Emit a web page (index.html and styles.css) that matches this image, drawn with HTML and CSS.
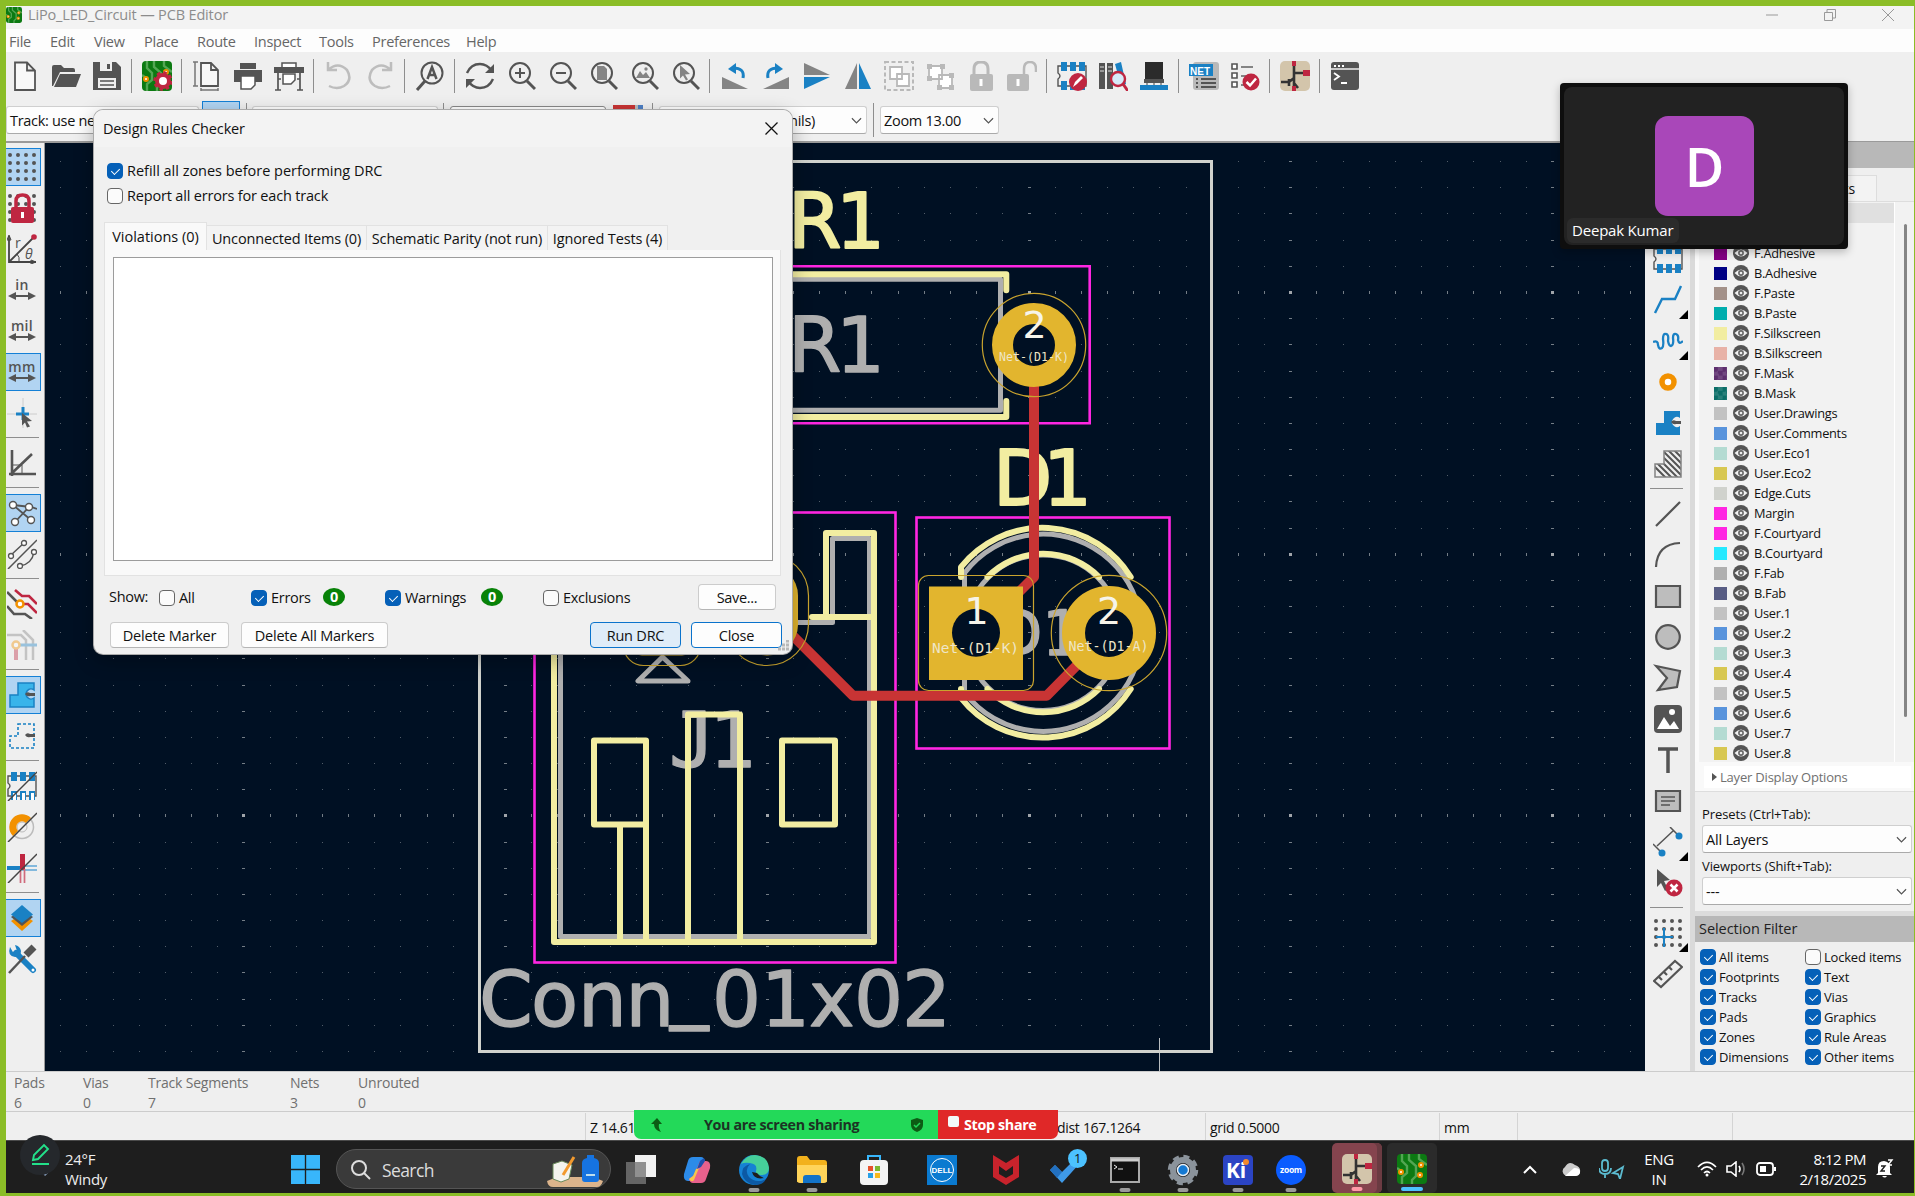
FILE: index.html
```html
<!DOCTYPE html>
<html lang="en">
<head>
<meta charset="utf-8">
<title>LiPo_LED_Circuit — PCB Editor</title>
<link rel="stylesheet" href="styles.css">
</head>
<body>
<svg width="0" height="0" class="defs">
  <defs>
    <symbol id="board" viewBox="0 0 30 30"><rect width="30" height="30" rx="4" fill="#0c7a12"/><path d="M5 0v7l5 5v7l-5 4v7M12 0v6l7 6v10l-4 4v4M22 0v5l8 6M0 14l4 3" fill="none" stroke="#53a653" stroke-width="2.4"/><g fill="#fff" stroke="#f29100" stroke-width="2"><circle cx="4" cy="18" r="2"/><circle cx="24" cy="11" r="2"/><circle cx="23" cy="21" r="2"/></g></symbol>
    <symbol id="sch" viewBox="0 0 30 30"><rect width="30" height="30" rx="5" fill="#d3c5ab"/><path d="M14 5v20M14 12h10M14 17l-5 4H1M9 18v7M14 22l4 5" stroke="#333" stroke-width="2.6" fill="none"/><path d="M12 0h4v5h-4zM23 9h7v6h-7zM12 25h4v5h-4z" fill="#bf2641"/></symbol>
    <symbol id="mag" viewBox="0 0 30 30"><circle cx="14" cy="12" r="10" fill="none" stroke="#545454" stroke-width="2"/><path d="M21 20l8 8" stroke="#545454" stroke-width="3"/></symbol>
    <symbol id="fp" viewBox="0 0 30 30"><path d="M4 5H1v7q4 3 0 6v7h28V5H4z" fill="none" stroke="#545454" stroke-width="1.4"/><path d="M4 1h6v9H4zM13 1h6v9h-6zM22 1h6v9h-6zM4 20h6v9H4zM13 20h6v9h-6zM22 20h6v9h-6z" fill="#1a81c4"/></symbol>
    <symbol id="zone" viewBox="0 0 30 30"><path d="M11 3h16v7a5 5 0 1 0 0 8v9H3V15h8z"/><path d="M18 14q2-3 5-1h5v3h-5q-3 1-5-2z" fill="#545454" stroke="none"/></symbol>
    <symbol id="eye" viewBox="0 0 16 16"><circle cx="8" cy="8" r="8" fill="#545454"/><path d="M1.5 8q6.500-7 13 0q-6.500 7-13 0z" fill="#f2f2f2"/><circle cx="8" cy="8" r="2.900" fill="#666"/><circle cx="8" cy="8" r="1.300" fill="#eee"/></symbol>
    <symbol id="dots" viewBox="0 0 30 30"><path d="M3 3h0M11 3h0M19 3h0M27 3h0M3 11h0M11 11h0M19 11h0M27 11h0M3 19h0M11 19h0M19 19h0M27 19h0M3 27h0M11 27h0M19 27h0M27 27h0" stroke="#545454" stroke-width="4" stroke-linecap="round"/></symbol>
    <symbol id="arrows" viewBox="0 0 30 30"><path d="M5 20h20" stroke="#545454" stroke-width="2"/><path d="M1 20l8-4v8zM29 20l-8-4v8z" fill="#545454"/></symbol>
  </defs>
</svg>

<div class="screen">
  <header class="titlebar">
    <svg class="app-ico"><use href="#board"/></svg>
    <span class="app-title">LiPo_LED_Circuit — PCB Editor</span>
    <div class="win-ctl">
      <svg width="12" height="12"><path d="M0 6h12"/></svg>
      <svg width="12" height="12"><path d="M.5 3.500h8v8h-8zM3 3V.500h8.500V9H9"/></svg>
      <svg width="12" height="12"><path d="M0 0l12 12M12 0L0 12"/></svg>
    </div>
  </header>
  <nav class="menubar"><span class="m1">File</span><span class="m2">Edit</span><span class="m3">View</span><span class="m4">Place</span><span class="m5">Route</span><span class="m6">Inspect</span><span class="m7">Tools</span><span class="m8">Preferences</span><span class="m9">Help</span></nav>

  <div class="toolbar">
    <i><svg viewBox="0 0 30 30"><path d="M5 1.500h12l8 8V29H5zM17 1.500v8h8" fill="#f8f8f8" stroke="#545454" stroke-width="1.800"/></svg></i>
    <i><svg viewBox="0 0 30 30"><path d="M1 25V6q0-2 2-2h7l3 3h9q2 0 2 2v2H9L2 25z" fill="#545454"/><path d="M9 13h21l-5 13H3z" fill="#545454"/></svg></i>
    <i><svg viewBox="0 0 30 30"><path d="M1 1h23l5 5v23H1z" fill="#545454"/><path d="M8 1h12v9H8z" fill="#efefef"/><path d="M15 3h3v5h-3z" fill="#545454"/><path d="M6 17h18v10H6z" fill="#efefef"/><path d="M8 20h14M8 24h14" stroke="#545454" stroke-width="1.500"/></svg></i>
    <b></b>
    <i><svg viewBox="0 0 30 30"><use href="#board"/><circle cx="21" cy="20" r="6" fill="#fff" stroke="#bf2641" stroke-width="4"/><circle cx="21" cy="20" r="8.500" fill="none" stroke="#bf2641" stroke-width="2.500" stroke-dasharray="3.500 3.170"/><circle cx="21" cy="20" r="2.500" fill="#fff"/></svg></i>
    <b></b>
    <i><svg viewBox="0 0 30 30"><path d="M9 2h10l7 7v16H9zM19 2v7h7" fill="#f8f8f8" stroke="#545454" stroke-width="1.800"/><path d="M3 1v24M1 1h5M1 25h5M9 29h17M9 27v3M26 27v3" stroke="#777" stroke-width="1.500"/></svg></i>
    <i><svg viewBox="0 0 30 30"><path d="M7 2h16v6H7zM1 9h28v12H1z" fill="#545454"/><path d="M8 15h14v9l-4 4H8z" fill="#fff" stroke="#545454" stroke-width="1.500"/></svg></i>
    <i><svg viewBox="0 0 30 30"><path d="M8 2h14v5H8z" fill="#fff" stroke="#545454" stroke-width="1.500"/><path d="M0 6h30v6H0z" fill="#545454"/><path d="M4 12v17M26 12v17M1 29h6M23 29h6M4 18h3M23 18h3" stroke="#545454" stroke-width="1.700"/><path d="M9 13h12v6l-4 4H9z" fill="#fff" stroke="#545454" stroke-width="1.500"/></svg></i>
    <b></b>
    <i><svg viewBox="0 0 30 30"><path d="M4 1v8h9M4 9Q14 0 23 9q6 10-3 16-7 4-15 0" fill="none" stroke="#bdbdbd" stroke-width="2.500"/></svg></i>
    <i><svg viewBox="0 0 30 30"><path d="M26 1v8h-9M26 9Q16 0 7 9q-6 10 3 16 7 4 15 0" fill="none" stroke="#bdbdbd" stroke-width="2.500"/></svg></i>
    <b></b>
    <i><svg viewBox="0 0 30 30"><circle cx="17" cy="12" r="10.500" fill="none" stroke="#545454" stroke-width="2"/><path d="M10 20l-8 9" stroke="#545454" stroke-width="3"/><path d="M12.500 18L17 6l4.500 12M14 14h6" fill="none" stroke="#545454" stroke-width="2.500"/></svg></i>
    <b></b>
    <i><svg viewBox="0 0 30 30"><path d="M2 12Q6 3 15 3q7 0 12 7M28 18q-4 9-13 9-7 0-12-7" fill="none" stroke="#545454" stroke-width="2.400"/><path d="M29 3v9h-9zM1 27v-9h9z" fill="#545454"/></svg></i>
    <i><svg viewBox="0 0 30 30"><use href="#mag"/><path d="M14 7v10M9 12h10" stroke="#545454" stroke-width="2"/></svg></i>
    <i><svg viewBox="0 0 30 30"><use href="#mag"/><path d="M9 12h10" stroke="#545454" stroke-width="2"/></svg></i>
    <i><svg viewBox="0 0 30 30"><use href="#mag"/><path d="M9 5h7l3 3v11H9z" fill="#848484"/></svg></i>
    <i><svg viewBox="0 0 30 30"><use href="#mag"/><path d="M7 17l4-7 3 4 3-3 4 6z" fill="#848484"/><circle cx="17" cy="8" r="1.700" fill="#848484"/></svg></i>
    <i><svg viewBox="0 0 30 30"><use href="#mag"/><path d="M10 4l10 9-5 .5 3 5-2 1-3-5-3 3z" fill="#848484"/></svg></i>
    <b></b>
    <i><svg viewBox="0 0 30 30"><path d="M2 16l26 12H2z" fill="#848484"/><path d="M23 17q2-10-10-10" fill="none" stroke="#1a81c4" stroke-width="3"/><path d="M8 8l8-6v11z" fill="#1a81c4"/></svg></i>
    <i><svg viewBox="0 0 30 30"><path d="M28 16v12H2z" fill="#848484"/><path d="M7 17Q5 7 17 7" fill="none" stroke="#1a81c4" stroke-width="3"/><path d="M22 8l-8-6v11z" fill="#1a81c4"/></svg></i>
    <i><svg viewBox="0 0 30 30"><path d="M2 2l26 12H2z" fill="#848484"/><path d="M2 28l26-12H2z" fill="#1a81c4"/></svg></i>
    <i><svg viewBox="0 0 30 30"><path d="M2 28L14 2v26z" fill="#848484"/><path d="M28 28L16 2v26z" fill="#1a81c4"/></svg></i>
    <i><svg viewBox="0 0 30 30"><rect x="1" y="1" width="28" height="28" fill="none" stroke="#b9b9b9" stroke-width="2" stroke-dasharray="4 2.500"/><path d="M6 6h12v12H6zM13 13h12v12H13z" fill="#fff" stroke="#b9b9b9" stroke-width="1.800"/></svg></i>
    <i><svg viewBox="0 0 30 30"><path d="M4 5h13v13H4zM14 14h13v13H14z" fill="#fff" stroke="#b9b9b9" stroke-width="1.800"/><path d="M2 3h5v5H2zM15 3h5v5h-5zM2 15h5v5H2zM24 12h5v5h-5zM12 24h5v5h-5zM24 24h5v5h-5z" fill="#b9b9b9"/></svg></i>
    <i><svg viewBox="0 0 30 30"><path d="M8 14V8q0-7 7-7t7 7v6" fill="none" stroke="#b9b9b9" stroke-width="3"/><rect x="4" y="13" width="23" height="17" rx="2" fill="#b9b9b9"/><path d="M15 18v7" stroke="#fff" stroke-width="3"/></svg></i>
    <i><svg viewBox="0 0 30 30"><path d="M17 14V8q0-7 6-7t6 7v3" fill="none" stroke="#b9b9b9" stroke-width="2.500"/><rect y="13" width="22" height="17" rx="2" fill="#b9b9b9"/><path d="M11 18v7" stroke="#fff" stroke-width="3"/></svg></i>
    <b></b>
    <i><svg viewBox="0 0 30 30"><use href="#fp"/><circle cx="21" cy="21" r="9" fill="#bf2641"/><path d="M16 26l2-5 6-6 2 2-6 6z" fill="#fff"/></svg></i>
    <i><svg viewBox="0 0 30 30"><path d="M1 2h6v26H1zM9 2h6v26H9z" fill="#545454"/><path d="M17 3l6-2 5 22-5 2z" fill="#1a81c4"/><path d="M2 6h4M10 6h4M2 10h4M10 10h4" stroke="#ddd"/><circle cx="20" cy="18" r="7" fill="#d6eaf8" stroke="#bf2641" stroke-width="2.400"/><path d="M25 23l5 7" stroke="#bf2641" stroke-width="3"/></svg></i>
    <i><svg viewBox="0 0 30 30"><path d="M6 1h18v17H6z" fill="#2b2b2b"/><path d="M5 18h20v4H5z" fill="#545454"/><path d="M8 22v3M15 22v3M22 22v3" stroke="#999" stroke-width="2"/><path d="M1 24h28v5H1z" fill="#1a81c4"/></svg></i>
    <b></b>
    <i><svg viewBox="0 0 30 30"><rect x="4" y="1" width="26" height="28" rx="3" fill="#b9b9b9"/><path d="M0 3h24v12H0z" fill="#1a81c4"/><text x="1" y="13.500" class="ico-net">NET</text><path d="M7 18h2M12 18h15M7 22h2M12 22h15M7 26h2M12 26h15" stroke="#545454" stroke-width="2"/></svg></i>
    <i><svg viewBox="0 0 30 30"><path d="M2 3h5v5H2zM2 12h5v5H2zM2 21h5v5H2z" fill="#fff" stroke="#545454" stroke-width="1.600"/><path d="M11 6h12M11 15h6M11 24h4" stroke="#848484" stroke-width="2"/><circle cx="21" cy="21" r="8.500" fill="#bf2641"/><path d="M16.500 21l3.500 3.500 6-7" stroke="#fff" stroke-width="2.500" fill="none"/></svg></i>
    <b></b>
    <i><svg><use href="#sch"/></svg></i>
    <b></b>
    <i><svg viewBox="0 0 30 30"><rect x="1" y="1" width="28" height="28" rx="3" fill="#545454"/><path d="M1 8h28" stroke="#eee" stroke-width="1.500"/><path d="M4 5h2M8 5h2M12 5h2" stroke="#fff" stroke-width="2"/><path d="M4 12l5 3.500-5 3.500M11 22h6" fill="none" stroke="#fff" stroke-width="1.800"/></svg></i>
  </div>

  <div class="toolbar2">
    <div class="combo c-track">Track: use netclass width</div>
    <div class="auto-btn"></div><b></b>
    <div class="combo c-via"></div><b></b>
    <div class="combo c-layer"></div>
    <div class="pair"></div><b></b>
    <div class="combo c-grid"><span>mils)</span><svg class="chev" viewBox="0 0 12 8"><path d="M1 1l5 5 5-5"/></svg></div><b></b>
    <div class="combo c-zoom">Zoom 13.00<svg class="chev" viewBox="0 0 12 8"><path d="M1 1l5 5 5-5"/></svg></div>
  </div>

  <main class="work">
    <aside class="leftbar">
      <i class="on"><svg><use href="#dots"/></svg></i>
      <i><svg viewBox="0 0 30 30"><use href="#dots"/><path d="M9 15V8q0-6 6.500-6T22 8v7" fill="none" stroke="#bf2641" stroke-width="3.500"/><rect x="4" y="14" width="23" height="16" rx="2" fill="#bf2641"/><path d="M15.500 19v6" stroke="#fff" stroke-width="3"/></svg></i>
      <i><svg viewBox="0 0 30 30"><path d="M2 2v26h27M2 28L26 4" fill="none" stroke="#444" stroke-width="1.800"/><path d="M0 6l2-5 2 5zM24 26l5 2-5 2zM10 20q3 3 2 8" fill="none" stroke="#444"/><circle cx="27" cy="3" r="2.800" fill="#bf2641"/><text x="8" y="14" class="ico-r">r</text><text x="18" y="25" class="ico-t">θ</text></svg></i>
      <i><svg viewBox="0 0 30 30"><use href="#arrows" y="1"/><text x="15" y="15" class="ico-u">in</text></svg></i>
      <i><svg viewBox="0 0 30 30"><use href="#arrows" y="1"/><text x="15" y="15" class="ico-u">mil</text></svg></i>
      <i class="on"><svg viewBox="0 0 30 30"><use href="#arrows" y="1"/><text x="15" y="15" class="ico-u">mm</text></svg></i>
      <i><svg viewBox="0 0 30 30"><path d="M16 0v30M0 16h30" stroke="#ccc"/><path d="M16 9v13M9 16h13" stroke="#1a81c4" stroke-width="3"/><path d="M15 15l10 8-5 .5 3 5-3 1-2-5-3 3z" fill="#545454"/></svg></i>
      <b></b>
      <i><svg viewBox="0 0 30 30"><path d="M5 2v26M2 26h27M4 26L25 6" stroke="#545454" stroke-width="2.600"/><path d="M6 17h9v9" fill="none" stroke="#545454"/></svg></i>
      <b></b>
      <i class="on"><svg viewBox="0 0 30 30"><path d="M6 7l18 2 6 2M8 24L22 9M6 7l18 15" stroke="#545454" stroke-width="1.800" fill="none"/><g fill="#fff" stroke="#545454" stroke-width="1.400"><circle cx="6" cy="7" r="3.500"/><circle cx="22" cy="9" r="3.500"/><circle cx="24" cy="22" r="3.500"/><circle cx="8" cy="24" r="3.500"/></g></svg></i>
      <i><svg viewBox="0 0 30 30"><path d="M1 30L30 1M4 16L17 4M13 27q12-2 14-14" stroke="#545454" stroke-width="1.500" fill="none"/><g fill="#fff" stroke="#545454" stroke-width="1.300"><circle cx="4" cy="17" r="2.500"/><circle cx="17" cy="4" r="2.500"/><circle cx="27" cy="13" r="2.500"/><circle cx="13" cy="27" r="2.500"/></g></svg></i>
      <b></b>
      <i><svg viewBox="0 0 30 30"><path d="M0 3l12 12M0 17l7 8h11l7 5" stroke="#545454" stroke-width="2.600" fill="none"/><path d="M8 1l7 6h7l8 8M13 15h8l9 9" stroke="#bf2641" stroke-width="2.600" fill="none"/><circle cx="13" cy="15" r="3.500" fill="#fff" stroke="#f29100" stroke-width="2.500"/></svg></i>
      <i class="dim"><svg viewBox="0 0 30 30"><path d="M0 5h14l5 5v20M16 0l10 10v20" stroke="#848484" stroke-width="2.500" fill="none"/><path d="M9 15h21" stroke="#1a81c4" stroke-width="3"/><path d="M9 17v13" stroke="#bf2641" stroke-width="4"/><circle cx="9" cy="15" r="3.500" fill="#fff" stroke="#f29100" stroke-width="2.500"/></svg></i>
      <b></b>
      <i class="on"><svg viewBox="0 0 30 30"><use href="#zone" fill="#39b4ea" stroke="#1a81c4" stroke-width="1.500"/></svg></i>
      <i><svg viewBox="0 0 30 30"><path d="M11 3h16v24H3V15h8z" fill="none" stroke="#1a81c4" stroke-width="1.600" stroke-dasharray="3 2"/><path d="M18 14q2-3 5-1h5v3h-5q-3 1-5-2z" fill="#545454"/></svg></i>
      <b></b>
      <i><svg viewBox="0 0 30 30"><use href="#fp"/><path d="M6 22h3v7H6zM15 22h3v7h-3zM24 22h3v7h-3z" fill="#fff"/><path d="M1 30L30 1" stroke="#444" stroke-width="1.500"/></svg></i>
      <i><svg viewBox="0 0 30 30"><circle cx="15" cy="15" r="11.500" fill="none" stroke="#bbb" stroke-width="1.500"/><circle cx="15" cy="15" r="5" fill="none" stroke="#bbb"/><path d="M6 24A12.500 12.500 0 0 1 24 6l-5 5a5.500 5.500 0 0 0-8 8z" fill="#f29100"/><path d="M1 30L30 1" stroke="#444" stroke-width="1.500"/></svg></i>
      <i><svg viewBox="0 0 30 30"><path d="M0 15h15" stroke="#1a81c4" stroke-width="4"/><path d="M15 13h15M15 17h15" stroke="#60a8d8" stroke-width="1.700"/><path d="M15.500 1v16" stroke="#bf2641" stroke-width="5"/><path d="M13.500 16v14M17.500 16v14" stroke="#d06a7c" stroke-width="1.700"/><path d="M1 30L30 1" stroke="#444" stroke-width="1.500"/></svg></i>
      <b></b>
      <i class="on"><svg viewBox="0 0 30 30"><path d="M4 18l11 10 11-10-3-2-8 6-8-6z" fill="#f29100"/><path d="M4 14l11 9 11-9-3-2H7z" fill="#545454"/><path d="M15 2l11 9.500L15 20 4 11.500z" fill="#1a81c4"/></svg></i>
      <i><svg viewBox="0 0 30 30"><path d="M9 9l17 17" stroke="#1a81c4" stroke-width="6" stroke-linecap="round"/><path d="M3 3q-3 9 5 10 6 0 6-6-1-5-6-6l2 6-3 3z" fill="#1a81c4"/><path d="M2 29l16-17" stroke="#545454" stroke-width="2.500"/><path d="M19 11l8-8" stroke="#545454" stroke-width="7"/><circle cx="26" cy="26" r="1.500" fill="#fff"/></svg></i>
    </aside>

    <svg class="pcb" viewBox="45 143 1600 928" width="1600" height="928">
      <g id="grid"></g>
      <path d="M1159.500 1038v33" stroke="#b9bdc0"/>
      <rect x="479.500" y="161.500" width="732" height="890" class="edge"/>
      <g class="fab">
        <path d="M700 279.300h300.500v131H700M560.500 600v336.500h309v-398h-37v84H798M662.500 657l-24.500 24h50z"/>
        <path d="M964.500 573v119.500A98.700 98.700 0 1 0 964.500 573z"/>
        <circle cx="1043" cy="632.700" r="77.700"/>
      </g>
      <g class="label fabtext">
        <text x="788 836" y="372">R1</text>
        <text x="669 709" y="767" class="j1">J1</text>
        <text x="479 531 578 625.500 670 712 761 809 854 902" y="1026 1026 1026 1026 1013 1026">Conn_01x02</text>
        <text x="994 1042" y="655" class="small">D1</text>
      </g>
      <g class="court">
        <path d="M700 266.300h389.700v157H700"/>
        <rect x="534.500" y="512.500" width="361" height="450"/>
        <rect x="916.500" y="517.500" width="253" height="231"/>
      </g>
      <g class="silk">
        <path d="M700 274.300h306.300v16M700 417h306.300v-16"/>
        <path d="M554 600v342h320V533h-48v84M812 617h62"/>
        <path d="M594 740.500h52V942M594 740.500v84h52M620 824.500V942M688 942V714.500h52V942M782 740.500h53v84h-53z"/>
        <path d="M961 577v-10A104 104 0 0 1 1130.700 577M961 689v9A104 104 0 0 0 1130.700 689"/>
        <path d="M987.500 577a78.500 78.500 0 0 1 111.500 0M987.500 689a78.500 78.500 0 0 0 111.500 0"/>
      </g>
      <g class="label silktext">
        <text x="788 836" y="248">R1</text>
        <text x="993 1043" y="505">D1</text>
      </g>
      <path class="track" d="M1034 345v232l-56 56M767 610l86 85.700h193.700l62-62.700"/>
      <g class="pad">
        <circle cx="1034" cy="345" r="31.500" stroke-width="21"/>
        <rect x="929" y="586.500" width="94" height="93.500" class="solid"/>
        <circle cx="976" cy="632.800" r="24" stroke="none"/>
        <circle cx="1109" cy="633" r="35.500" stroke-width="23"/>
        <rect x="736" y="564.500" width="62" height="91" rx="31" class="solid"/>
        <rect x="634" y="564.500" width="56" height="91" rx="8" class="solid"/>
      </g>
      <g class="clear">
        <circle cx="1034" cy="345" r="51.700"/>
        <rect x="918.500" y="575.500" width="115" height="115" rx="10"/>
        <circle cx="1109" cy="633" r="57.700"/>
        <rect x="725.500" y="554" width="83" height="111.500" rx="41.500"/>
        <rect x="623.500" y="554" width="77" height="111.500" rx="20"/>
      </g>
      <g class="padnum"><text x="1034.500" y="337.500">2</text><text x="976.500" y="624">1</text><text x="1109" y="624">2</text></g>
      <g class="net"><text x="1034" y="361" textLength="70">Net-(D1-K)</text><text x="975.500" y="652.500" textLength="87" class="lg">Net-(D1-K)</text><text x="1108.500" y="650.500" textLength="80" class="md">Net-(D1-A)</text></g>
    </svg>

    <aside class="rightbar">
      <i><svg><use href="#fp"/></svg></i>
      <i class="more"><svg viewBox="0 0 30 30"><path d="M2 28l7-14h13l6-13" fill="none" stroke="#1a81c4" stroke-width="2.400"/></svg></i>
      <i class="more"><svg viewBox="0 0 30 30"><path d="M0 16q5-2 5 3 1 5 4 3 2-2 1-9 0-6 3-5 3 0 2 7 1 5 3 5 3-1 2-8 0-5 3-4 3 1 2 6 1 5 5 1" fill="none" stroke="#1a81c4" stroke-width="2.300"/></svg></i>
      <i><svg viewBox="0 0 30 30"><circle cx="15" cy="15" r="6" fill="#fff" stroke="#f29100" stroke-width="5.500"/></svg></i>
      <i><svg viewBox="0 0 30 30"><use href="#zone" fill="#1a81c4"/></svg></i>
      <i><svg viewBox="0 0 30 30"><clipPath id="hz"><path d="M11 2h17v26H2V15h9z"/></clipPath><g clip-path="url(#hz)"><path d="M-10 0l30 30M-4 0l30 30M2 0l30 30M8 0l30 30M14 0l30 30M20 0l30 30M-16 0l30 30" stroke="#545454" stroke-width="2"/></g><path d="M11 2h17v26H2V15h9z" fill="none" stroke="#848484" stroke-width="1.500"/></svg></i>
      <b></b>
      <i><svg viewBox="0 0 30 30"><path d="M3 27L27 3" stroke="#545454" stroke-width="2.200"/></svg></i>
      <i><svg viewBox="0 0 30 30"><path d="M3 27Q4 4 27 3" stroke="#545454" stroke-width="2.200" fill="none"/></svg></i>
      <i><svg viewBox="0 0 30 30"><path d="M3 5h24v21H3z" fill="#bdbdbd" stroke="#545454" stroke-width="2.200"/></svg></i>
      <i><svg viewBox="0 0 30 30"><circle cx="15" cy="15" r="11.800" fill="#bdbdbd" stroke="#545454" stroke-width="2.200"/></svg></i>
      <i><svg viewBox="0 0 30 30"><path d="M3 3l24 5-3 16-19 3 9-12z" fill="#bdbdbd" stroke="#545454" stroke-width="2.200"/></svg></i>
      <i><svg viewBox="0 0 30 30"><rect x="1" y="1" width="28" height="28" rx="4" fill="#545454"/><path d="M4 25l7-12 6 9 4-5 5 8z" fill="#fff"/><circle cx="19" cy="8" r="3" fill="#fff"/></svg></i>
      <i><svg viewBox="0 0 30 30"><path d="M5 4h20M15 4v24" stroke="#545454" stroke-width="3.500"/></svg></i>
      <i><svg viewBox="0 0 30 30"><path d="M3 5h24v20H3z" fill="#bdbdbd" stroke="#545454" stroke-width="2.200"/><path d="M8 11h14M8 15h14M8 19h9" stroke="#545454" stroke-width="1.500"/></svg></i>
      <i class="more"><svg viewBox="0 0 30 30"><path d="M0 17l9 9M17 0l9 9M4 19L20 4" stroke="#545454" stroke-width="1.500"/><circle cx="9" cy="26" r="3.500" fill="#1a81c4"/><circle cx="26" cy="9" r="3.500" fill="#1a81c4"/></svg></i>
      <i><svg viewBox="0 0 30 30"><path d="M4 1l13 11-6 1 4 8-3 2-4-8-4 4z" fill="#545454"/><circle cx="21" cy="20" r="8.500" fill="#bf2641"/><path d="M17.500 16.500l7 7M24.500 16.500l-7 7" stroke="#fff" stroke-width="2.600"/></svg></i>
      <b></b>
      <i class="more"><svg viewBox="0 0 30 30"><use href="#dots"/><path d="M11 10v19M3 19h17" stroke="#1a81c4" stroke-width="2"/></svg></i>
      <i><svg viewBox="0 0 30 30"><path d="M1 22L22 2l7 6L8 28zM6 18l3 3M11 13l3 3M16 8l3 3" fill="none" stroke="#545454" stroke-width="2.200"/></svg></i>
    </aside>
    <div class="sash"></div>

    <aside class="panel">
      <div class="head"></div>
      <div class="ptabs"><span>Objects</span></div>
      <div class="layers">
        <div class="layer-list" id="layers"></div>
        <div class="scroll"></div>
      </div>
      <div class="ldo"><span><u></u>Layer Display Options</span></div>
      <label class="l1">Presets (Ctrl+Tab):</label>
      <div class="combo pc">All Layers<svg class="chev" viewBox="0 0 12 8"><path d="M1 1l5 5 5-5"/></svg></div>
      <label class="l2">Viewports (Shift+Tab):</label>
      <div class="combo pc">---<svg class="chev" viewBox="0 0 12 8"><path d="M1 1l5 5 5-5"/></svg></div>
      <div class="head sel">Selection Filter</div>
      <div class="filter" id="filter"></div>
    </aside>
  </main>

  <section class="msg">
    <div class="g1">Pads<br>6</div><div class="g2">Vias<br>0</div><div class="g3">Track Segments<br>7</div><div class="g4">Nets<br>3</div><div class="g5">Unrouted<br>0</div>
  </section>
  <section class="status">
    <span class="s0"></span><span class="s1">Z 14.61</span><span class="s2">dist 167.1264</span><span class="s3">grid 0.5000</span><span class="s4">mm</span><span class="s5"></span><span class="s6"></span>
  </section>

  <footer class="taskbar">
    <div class="weather">24°F<br>Windy</div>
    <svg class="tb-win" viewBox="0 0 30 30"><path d="M0 0h14.300v14.300H0zM15.700 0H30v14.300H15.700zM0 15.700h14.300V30H0zM15.700 15.700H30V30H15.700z" fill="#38b6fb"/></svg>
    <div class="search">
      <svg width="22" height="22" viewBox="0 0 22 22"><circle cx="9" cy="9" r="7" fill="none" stroke="#ddd" stroke-width="2"/><path d="M14 14l6 6" stroke="#ddd" stroke-width="2"/></svg>
      <span>Search</span>
      <svg class="art" viewBox="0 0 56 34"><path d="M0 28l10-4h36l10 4q-2 6-6 6H6q-5 0-6-6z" fill="#dcb48c"/><path d="M6 11l9-3 10 4-3 14-8 3-8-3z" fill="#f4f4ee" stroke="#6a8a5a"/><path d="M16 22L27 4" stroke="#f29a2e" stroke-width="3"/><path d="M35 10q0-4 5-5V2h7v3q5 1 5 5v16q0 3-3 3H38q-3 0-3-3z" fill="#1673e0"/><path d="M39 22h9" stroke="#bde" stroke-width="2"/></svg>
    </div>
    <svg class="tb t1" viewBox="0 0 30 30"><path d="M9 0h21v22H9z" fill="#f2f2f2"/><path d="M0 7h20v22H0z" fill="#777" opacity=".8"/></svg>
    <svg class="tb t2" viewBox="0 0 30 30"><path d="M11 2h8q3 0 4 4l-5 6-6 14H6Q1 26 2 19L6 6q1-4 5-4z" fill="#2c8be8"/><path d="M19 28h-8q-3 0-4-4l5-4 6-14h6q5 0 4 7l-4 11q-1 4-5 4z" fill="#e8618c"/><path d="M7 24l4-3 3-7 3-1-5 12q-2 3-5-1z" fill="#f4c64c"/><path d="M18 6l-3 8 4-2 4-6-1-3z" fill="#1d4fae"/></svg>
    <svg class="tb t3" viewBox="0 0 30 30"><circle cx="15" cy="15" r="15" fill="#1682d4"/><path d="M2 9Q7 0 16 0q13 1 14 13 0 7-8 7-6 0-5-4 2-7-6-8-6-1-9 1z" fill="#46cf9a"/><path d="M11 9q-6 6-1 13 7 7 17 2-3 6-11 6Q5 28 3 19q0-8 8-10z" fill="#0c59a4"/><path d="M13 17q2 8 12 6-4-1-7-5z" fill="#1e1e1e"/><path d="M11.500 35h7" class="run"/></svg>
    <svg class="tb t4" viewBox="0 0 30 30"><path d="M0 4q0-3 3-3h7l3 4h14q3 0 3 3v19H0z" fill="#f2b11c"/><path d="M0 10h30v15q0 3-3 3H3q-3 0-3-3z" fill="#ffd45a"/><path d="M6 28v-5q0-3 3-3h12q3 0 3 3v5z" fill="#1373c8"/><path d="M11.500 35h7" class="run"/></svg>
    <svg class="tb t5" viewBox="0 0 30 30"><path d="M9 6V1h12v5" fill="none" stroke="#38b6fb" stroke-width="2"/><rect x="1" y="5" width="28" height="25" rx="4" fill="#f4f4f4"/><path d="M9 11h5v5H9z" fill="#e8512c"/><path d="M16 11h5v5h-5z" fill="#7cb82f"/><path d="M9 18h5v5H9z" fill="#27a0e8"/><path d="M16 18h5v5h-5z" fill="#f8b81c"/></svg>
    <svg class="tb t6" viewBox="0 0 30 30"><path d="M0 0h30v30H0z" fill="#0a7ad0"/><circle cx="15" cy="15" r="11.500" fill="none" stroke="#fff"/><text x="15" y="18" class="dell">DELL</text></svg>
    <svg class="tb t7" viewBox="0 0 30 30"><path d="M2 0l13 8L28 0v22l-13 8-13-8zM8 11v8l7 4 7-4v-8l-7 5z" fill="#c8232c" fill-rule="evenodd"/></svg>
    <svg class="tb t8" viewBox="0 0 30 30"><path d="M0 15l5-5 7 7L26 3l4 5-18 20z" fill="#3f9ae8"/><path d="M0 15l5-5 7 7-5 6z" fill="#2270c0"/></svg>
    <svg class="tb t9" viewBox="0 0 30 30"><path d="M1 3h28v24H1z" fill="#111" stroke="#aaa" stroke-width="2"/><path d="M1 5h28" stroke="#ccc" stroke-width="3"/><path d="M4 10l3 2-3 2M8 14h5" stroke="#eee" fill="none"/><path d="M11.500 35h7" class="run"/></svg>
    <svg class="tb t10" viewBox="0 0 30 30"><circle cx="15" cy="15" r="10" fill="none" stroke="#8b939b" stroke-width="6"/><circle cx="15" cy="15" r="13.500" fill="none" stroke="#8b939b" stroke-width="3.500" stroke-dasharray="6 4.600"/><circle cx="15" cy="15" r="5.500" fill="#1479d2" stroke="#e8eef4" stroke-width="1.500"/><path d="M11.500 35h7" class="run"/></svg>
    <svg class="tb t11" viewBox="0 0 30 30"><rect width="30" height="30" rx="4" fill="#2b44c4"/><text x="3" y="23" class="ki">Ki</text><circle cx="23" cy="7" r="3" fill="#f28a2c"/><path d="M11.500 35h7" class="run"/></svg>
    <svg class="tb t12" viewBox="0 0 30 30"><circle cx="15" cy="15" r="15" fill="#0b5cff"/><text x="15" y="18" class="zm">zoom</text><path d="M11.500 35h7" class="run"/></svg>
    <div class="tile red"><svg viewBox="0 0 30 30"><use href="#sch"/><path d="M11.500 35h7" class="run pink"/></svg></div>
    <div class="tile"><svg viewBox="0 0 30 30"><use href="#board"/><path d="M6 35h18" class="run blue"/></svg></div>
    <div class="tray">
      <svg class="y1" viewBox="0 0 14 9"><path d="M1 8l6-6 6 6" fill="none" stroke="#fff" stroke-width="2"/></svg>
      <svg class="y2" viewBox="0 0 20 14"><path d="M5 14a5 5 0 0 1-1-9Q8-2 14 3q6 2 5 7-1 4-5 4z" fill="#ccc"/><path d="M4 14l9-8q7 0 6 5-1 3-5 3z" fill="#fff"/></svg>
      <svg class="y3" viewBox="0 0 26 20"><path d="M6 1q3 0 3 3v5q0 3-3 3t-3-3V4q0-3 3-3zM0 9q0 6 6 6t6-6M6 15v4M24 8l-10 6 5 1 2 5z" fill="none" stroke="#5cbbd0" stroke-width="1.800"/></svg>
      <span class="lang">ENG<br>IN</span>
      <svg class="y4" viewBox="0 0 20 16"><path d="M1 6q9-9 18 0M4 9q6-6 12 0M7 12q3-3 6 0" fill="none" stroke="#fff" stroke-width="1.700"/><circle cx="10" cy="14" r="1.500" fill="#fff"/></svg>
      <svg class="y5" viewBox="0 0 20 16"><path d="M1 5h4l5-4v14l-5-4H1zM13 5q2 3 0 6" fill="none" stroke="#fff" stroke-width="1.600"/><path d="M16 2q4 6 0 12" fill="none" stroke="#777" stroke-width="1.600"/></svg>
      <svg class="y6" viewBox="0 0 20 14"><rect x="1" y="1" width="16" height="12" rx="3" fill="none" stroke="#fff" stroke-width="1.800"/><path d="M4 4h6v6H4z" fill="#fff"/><path d="M19 5v4" stroke="#fff" stroke-width="2"/></svg>
      <span class="clock">8:12 PM<br>2/18/2025</span>
      <svg class="y7" viewBox="0 0 18 20"><path d="M2 14V8q0-6 6-6 6 1 6 6v6l2 2H0zM6 17h5q-2 3-5 0z" fill="#fff"/><path d="M5 7h4l-4 5h4" fill="none" stroke="#1e1e1e" stroke-width="1.400"/><path d="M12 1h4l-4 5h4" fill="none" stroke="#fff" stroke-width="1.400"/></svg>
    </div>
  </footer>

  <section class="dialog">
    <div class="dtitle">Design Rules Checker<svg width="13" height="13"><path d="M.5.500l12 12M12.500.500l-12 12" stroke="#111" stroke-width="1.300"/></svg></div>
    <div class="check r1"><s class="ck"></s>Refill all zones before performing DRC</div>
    <div class="check r2"><s></s>Report all errors for each track</div>
    <div class="dtabs"><span class="cur">Violations (0)</span><span class="w1">Unconnected Items (0)</span><span class="w2">Schematic Parity (not run)</span><span class="w3">Ignored Tests (4)</span></div>
    <div class="dpanel"><div class="dlist"></div></div>
    <div class="show">
      <span class="sh">Show:</span>
      <div class="check k1"><s></s>All</div>
      <div class="check k2"><s class="ck"></s>Errors</div><em>0</em>
      <div class="check k3"><s class="ck"></s>Warnings</div><em>0</em>
      <div class="check k4"><s></s>Exclusions</div>
      <button class="save">Save...</button>
    </div>
    <div class="btns"><button class="b1">Delete Marker</button><button class="b2">Delete All Markers</button><button class="b3">Run DRC</button><button class="b4">Close</button></div>
    <svg class="grip" width="12" height="12"><path d="M9 1h3M5 5h3M9 5h3M1 9h3M5 9h3M9 9h3" stroke="#b8b8b8" stroke-width="3"/></svg>
  </section>

  <section class="meeting">
    <div class="mtile"><div class="avatar">D</div><span>Deepak Kumar</span></div>
  </section>

  <div class="share">
    <div class="sharing"><svg width="12" height="14" viewBox="0 0 12 14"><path d="M6 0L0 6h3q0 6 7 8-3-4-2-8h3z" fill="#0c5c14"/></svg><span>You are screen sharing</span><svg width="14" height="14" viewBox="0 0 14 14"><path d="M7 0l6 2v5q0 5-6 7-6-2-6-7V2z" fill="#0c5c14"/><path d="M4 7l2 2 4-4" fill="none" stroke="#23d959" stroke-width="1.500"/></svg></div>
    <div class="stop"><u></u>Stop share</div>
  </div>
  <svg class="pen" viewBox="0 0 40 40"><path d="M5 32h11v6zM24 34h8l-7 7-4-5z" fill="#8fa8c8"/><circle cx="20" cy="20" r="20" fill="#25282c"/><path d="M13 25l1-5 10-10 4 4-10 10zM12 29h17" fill="none" stroke="#23e08a" stroke-width="1.900"/></svg>
  <div class="todo-badge">1</div>
</div>
<script src="script.js"></script>
</body>
</html>
```
FILE: styles.css
```css
* { box-sizing: border-box; }
body { margin: 0; font: 14.500px/20px "Open Sans", "Noto Sans", sans-serif; letter-spacing: -0.3px; color: #111; }
i, em { font-style: normal; }
u, s { text-decoration: none; }
.defs { position: absolute; }
.screen { position: relative; width: 1915px; height: 1196px; overflow: hidden; background: #efefef; border: solid #8bbd27; border-width: 6px 1px 3px 6px; display: flex; flex-direction: column; }
.screen > * { flex: none; }

.titlebar { height: 23px; background: #f3f3f3; display: flex; align-items: center; color: #8c8c8c; padding-bottom: 5px; letter-spacing: -0.15px; }
.app-ico { width: 16px; height: 18px; margin-right: 6px; }
.app-title { flex: 1; }
.win-ctl { display: flex; gap: 46px; margin-right: 20px; }
.win-ctl path { fill: none; stroke: #999; }
.menubar { height: 23px; background: #fdfdfd; color: #666; display: flex; align-items: center; padding: 2px 0 0 3px; letter-spacing: -0.25px; }
.menubar span { white-space: nowrap; }
.m1 { width: 41px; } .m2 { width: 44px; } .m3 { width: 50px; } .m4 { width: 53px; } .m5 { width: 57px; } .m6 { width: 65px; } .m7 { width: 53px; } .m8 { width: 94px; }

.toolbar { height: 48px; display: flex; align-items: center; }
.toolbar i { width: 41px; flex: none; height: 30px; padding-left: 3.500px; }
.toolbar i svg { width: 30px; height: 30px; display: block; }
.toolbar b { width: 1px; height: 34px; background: #8e8e8e; margin: 0 6px 0 2px; }
.ico-net { font: bold 10px "Liberation Sans", sans-serif; fill: #fff; letter-spacing: 0; }

.toolbar2 { height: 43px; display: flex; align-items: flex-start; border-bottom: 2px solid #9a9a9a; padding-top: 1px; }
.combo { background: #fdfdfd; border: 1px solid #cfcfcf; border-bottom-color: #aaa; border-radius: 3px; height: 28px; margin-top: 5px; padding: 4px 4px 0 3px; display: flex; justify-content: space-between; white-space: nowrap; overflow: hidden; }
.toolbar2 b { width: 1px; height: 34px; background: #8e8e8e; margin-top: 2px; }
.chev { width: 11px; height: 8px; margin-top: 6px; flex: none; }
.chev path { fill: none; stroke: #555; stroke-width: 1.300; }
.c-track { width: 193px; }
.auto-btn { width: 38px; height: 38px; margin: 0 6px 0 3px; background: #b1d4f2; border: 1px solid #1480d6; }
.c-via { width: 186px; margin: 5px 5px 0 5px; }
.c-layer { width: 156px; margin: 5px 6px 0 6px; border-color: #888; }
.pair { width: 30px; height: 26px; margin: 4px 9px 0 1px; background: linear-gradient(90deg, #c83434 22px, #bbb 22px 25px, #4d7fc4 25px); }
.c-grid { width: 208px; margin: 5px 6px 0 6px; }
.c-grid span { width: 152px; text-align: right; }
.c-zoom { width: 119px; margin-left: 6px; }

.work { height: 928px; display: flex; }
.work > * { flex: none; }
.leftbar { width: 39px; border-right: 1px solid #9a9a9a; padding-top: 5px; display: flex; flex-direction: column; }
.leftbar i, .rightbar i { flex: none; width: 35px; height: 38px; margin-bottom: 3px; padding: 4px 0 0 1px; }
.leftbar i svg, .rightbar i svg { width: 30px; height: 30px; display: block; }
.leftbar i.on { background: #b1d4f2; border: 1px solid #1480d6; border-left: 0; padding-top: 3px; }
.leftbar i.dim { opacity: .4; }
.leftbar b, .rightbar b { flex: none; height: 1px; width: 33px; background: #8e8e8e; margin: 2px 0 6px; }
.ico-u { font: 600 14px "Open Sans", sans-serif; fill: #545454; text-anchor: middle; letter-spacing: .3px; }
.ico-r { font: 14px "Open Sans", sans-serif; fill: #545454; }
.ico-t { font: italic 14px "Open Sans", sans-serif; fill: #545454; }
.pcb { background: #001023; display: block; }
.edge { fill: none; stroke: #d0d2cd; stroke-width: 3; }
.fab { fill: none; stroke: #afafaf; stroke-width: 5; stroke-linejoin: round; }
.court { fill: none; stroke: #ff26e2; stroke-width: 2.600; }
.silk { fill: none; stroke: #f2eda1; stroke-width: 6; stroke-linejoin: round; stroke-linecap: round; }
.label { font: 77px "DejaVu Sans", sans-serif; letter-spacing: 0; stroke-width: 2; stroke-linejoin: round; }
.fabtext { fill: #afafaf; stroke: #afafaf; stroke-width: 1.400; }
.silktext { fill: #f2eda1; stroke: #f2eda1; }
.label .small { font-size: 63px; }
.label .j1 { font-family: "DejaVu Sans Mono", monospace; }
.track { fill: none; stroke: #c83434; stroke-width: 10; stroke-linejoin: round; }
.pad { fill: #001023; stroke: #e2b52e; }
.pad .solid { fill: #e2b52e; stroke: none; }
.clear { fill: none; stroke: #c9a42e; stroke-width: 1.200; }
.padnum { font: 38px "DejaVu Sans", sans-serif; fill: #f6f4ea; text-anchor: middle; letter-spacing: 0; }
.net { font: 11.600px "DejaVu Sans Mono", monospace; fill: #efe6c8; text-anchor: middle; letter-spacing: 0; }
.net .lg { font-size: 14.400px; }
.net .md { font-size: 13.300px; }

.rightbar { width: 45px; padding: 97px 0 0 5px; display: flex; flex-direction: column; }
.rightbar i { padding-left: 3px; position: relative; width: 38px; }
.rightbar i.more::after { content: ""; position: absolute; right: 0; bottom: 0; border: solid transparent; border-width: 0 0 9px 9px; border-bottom-color: #000; }
.sash { width: 5px; background: #dadada; }
.panel { width: 219px; font-size: 13px; letter-spacing: -0.1px; }
.head { height: 26px; background: #b8b8b8; margin-top: -1px; padding: 3px 4px; font-size: 14.500px; letter-spacing: -0.05px; color: #222; }
.ptabs { height: 34px; padding: 7px 0 0 100px; border-bottom: 1px solid #ddd; font-size: 14px; }
.ptabs span { display: block; width: 82px; height: 26px; border: 1px solid #ddd; border-bottom: 0; background: #f3f3f3; text-align: right; padding: 3px 21px 0 0; }
.layers { height: 560px; background: #f2f2f2; border-left: 4px solid #fafafa; display: flex; }
.layer-list { width: 196px; border-right: 1px solid #fff; padding-top: 1px; }
.layer { height: 20px; display: flex; align-items: center; padding-left: 15px; font-size: 12.800px; letter-spacing: -0.28px; }
.layer.first { background: #e0e0e0; }
.layer .sw { width: 13px; height: 13px; margin-right: 6px; }
.layer .checker { background-image: conic-gradient(rgba(255,255,255,.12) 25%, transparent 0 50%, rgba(255,255,255,.12) 0 75%, transparent 0); background-size: 8.600px 8.600px; }
.layer svg { width: 16px; height: 16px; margin-right: 5px; }
.scroll { width: 3px; height: 493px; background: #858585; border-radius: 2px; margin: 22px 0 0 9px; }
.ldo { height: 30px; background: #f9f9f9; border-bottom: 1px solid #ddd; padding: 4px 3px 0 9px; color: #707070; letter-spacing: -0.2px; }
.ldo span { display: flex; align-items: center; height: 22px; background: #fff; padding-left: 8px; }
.ldo u { border: solid transparent; border-width: 4px 0 4px 5px; border-left-color: #555; margin-right: 3px; }
.panel label { display: block; padding-left: 7px; height: 20px; }
.l1 { margin-top: 12px; } .l2 { margin-top: 3px; }
.pc { width: 210px; margin: 0 0 0 7px; font-size: 14.500px; letter-spacing: -0.2px; padding-left: 3px; }
.panel label + .pc { margin-top: 1px; }
.head.sel { margin-top: 11px; box-shadow: 0 -5px #dcdcdc; }
.filter { display: grid; grid-template-columns: 105px 1fr; grid-auto-rows: 20px; padding: 5px 0 0 5px; letter-spacing: -0.2px; }
.check { display: flex; align-items: center; white-space: nowrap; }
.check s { width: 16px; height: 16px; border: 1px solid #666; border-radius: 4px; background: #fbfbfb; margin-right: 4px; flex: none; }
.filter .check s { margin-right: 3px; }
.check s.ck { background: #0560b8; border-color: #0560b8; }
.check s.ck::after { content: ""; display: block; width: 7px; height: 4px; border: solid #fff; border-width: 0 0 1.300px 1.300px; transform: translate(3.500px, 4px) rotate(-45deg); }

.msg { height: 41px; display: flex; color: #707070; font-size: 14px; letter-spacing: -0.2px; padding: 1px 0 0 8px; border-top: 1px solid #ccc; border-bottom: 1px solid #ccc; line-height: 19.500px; }
.g1 { width: 69px; } .g2 { width: 65px; } .g3 { width: 142px; } .g4 { width: 68px; }
.status { height: 28px; display: flex; padding-top: 1px; }
.status span { border-left: 1px solid #d4d4d4; padding: 5px 0 0 4px; font-size: 14px; }
.status .s0 { width: 579px; border: 0; } .s1 { width: 470px; } .status .s2 { width: 150px; border: 0; padding-left: 2px; } .s3 { width: 234px; } .s4 { width: 78px; } .s5 { width: 215px; }

.taskbar { height: 53px; background: #1e1e1e; border-top: 1px solid #4a4a4a; color: #fff; display: flex; align-items: center; }
.taskbar > * { flex: none; }
.weather { width: 226px; padding-left: 59px; line-height: 20.500px; font-size: 15px; padding-top: 4px; color: #eee; }
.tb-win { width: 29px; height: 29px; margin: 4px 16px 0 59px; }
.search { width: 275px; height: 40px; border-radius: 20px; background: #3a3a3a; border: 1px solid #555; display: flex; align-items: center; padding: 1px 7px 0 13px; font-size: 17.500px; color: #ddd; margin-top: 4px; }
.search span { flex: 1; padding-left: 10px; letter-spacing: -0.6px; }
.art { width: 56px; height: 34px; }
.tb { width: 30px; height: 30px; margin-top: 5px; overflow: visible; }
.run { stroke: #9a9a9a; stroke-width: 4; fill: none; stroke-linecap: round; }
.run.pink { stroke: #ff9aa8; }
.run.blue { stroke: #4cc2ff; }
.t1 { margin-left: 15px; } .t2 { margin-left: 26px; } .t3 { margin-left: 27px; } .t4 { margin-left: 28px; } .t5 { margin-left: 32px; } .t6 { margin-left: 38px; } .t7 { margin-left: 34px; } .t8 { margin-left: 29px; } .t9 { margin-left: 30px; } .t10 { margin-left: 28px; } .t11 { margin-left: 25px; } .t12 { margin-left: 23px; }
.dell { font: bold 8px "Liberation Sans", sans-serif; fill: #fff; text-anchor: middle; letter-spacing: 0; }
.ki { font: bold 21px "Open Sans", sans-serif; fill: #fff; }
.zm { font: bold 8.500px "Open Sans", sans-serif; fill: #fff; text-anchor: middle; }
.tile { width: 50px; height: 50px; margin: 2px 0 0 5px; border-radius: 5px; background: #2b2b2b; padding: 11px 10px; }
.tile svg { width: 30px; height: 30px; display: block; overflow: visible; }
.tile.red { background: #85444e; margin-left: 26px; box-shadow: inset -5px 0 #6b3b42; }
.tray { display: flex; align-items: center; flex: 1; font-size: 15px; line-height: 20.500px; padding-top: 4px; }
.tray svg, .tray span { flex: none; }
.y1 { width: 14px; height: 9px; margin-left: 86px; }
.y2 { width: 20px; height: 14px; margin-left: 24px; }
.y3 { width: 26px; height: 20px; margin-left: 18px; }
.lang { width: 40px; text-align: center; margin-left: 14px; }
.y4 { width: 20px; height: 16px; margin-left: 18px; }
.y5 { width: 20px; height: 16px; margin-left: 9px; }
.y6 { width: 20px; height: 14px; margin-left: 10px; }
.clock { width: 80px; text-align: right; margin-left: 10px; letter-spacing: -0.5px; }
.y7 { width: 18px; height: 20px; margin-left: 10px; }

.dialog { position: absolute; left: 88px; top: 104px; width: 698px; height: 544px; background: #f0f0f0; border-radius: 9px; box-shadow: 0 0 0 1px #aaa, 0 6px 20px rgba(0,0,0,.3); display: flex; flex-direction: column; overflow: hidden; }
.dialog > * { flex: none; }
.dtitle { height: 37px; background: #f3f3f3; display: flex; justify-content: space-between; align-items: center; padding: 0 14px 0 9px; letter-spacing: -0.15px; }
.dialog .check { height: 20px; }
.r1 { margin: 14px 0 0 13px; letter-spacing: -0.02px; } .r2 { margin: 5px 0 0 13px; letter-spacing: -0.18px; }
.dtabs { display: flex; align-items: flex-end; height: 28px; margin: 16px 0 0 10px; white-space: nowrap; letter-spacing: -0.15px; }
.dtabs span { height: 25px; border: 1px solid #e2e2e2; border-bottom: 0; border-left: 0; background: #f3f3f3; text-align: center; padding-top: 3px; }
.dtabs .cur { width: 103px; height: 28px; background: #f9f9f9; border-left: 1px solid #e2e2e2; padding-top: 4px; letter-spacing: 0; }
.w1 { width: 160px; } .w2 { width: 181px; } .w3 { width: 120px; }
.dpanel { width: 677px; height: 326px; margin-left: 10px; border: 1px solid #e2e2e2; border-top: 0; background: #f9f9f9; padding: 7px 7px 14px 8px; }
.dlist { height: 304px; background: #fff; border: 1px solid #9c9c9c; }
.show { display: flex; align-items: center; height: 26px; margin-top: 8px; padding-left: 15px; }
.show .check { padding-top: 1px; }
.show em { width: 22px; height: 18px; border-radius: 50%; background: #088208; color: #fff; font-weight: bold; text-align: center; line-height: 18px; margin-top: -1px; }
.sh { width: 50px; } .k1 { width: 92px; } .k2 { width: 72px; } .k3 { width: 96px; margin-left: 40px; } .k4 { width: 155px; margin-left: 40px; }
button { font: inherit; letter-spacing: inherit; color: #111; height: 26px; background: #fdfdfd; border: 1px solid #ccc; border-bottom-color: #b5b5b5; border-radius: 4px; padding: 1px 0 0; white-space: nowrap; }
.save { width: 78px; }
.btns { display: flex; margin: 12px 0 0 16px; letter-spacing: -0.22px; }
.b1 { width: 119px; } .b2 { width: 147px; margin-left: 12px; } .b3 { width: 91px; margin-left: 202px; background: #dfecf8; } .b4 { width: 91px; margin-left: 10px; }
.b3, .b4 { border-color: #0a73cc; }
.grip { position: absolute; right: 3px; bottom: 2px; }

.meeting { position: absolute; left: 1554px; top: 77px; width: 288px; height: 166px; background: #0e0e0e; border-radius: 4px; padding: 4px; box-shadow: 0 3px 8px rgba(0,0,0,.25); }
.mtile { height: 158px; background: #222; border-radius: 8px; padding: 29px 3px 0; display: flex; flex-direction: column; }
.avatar { width: 99px; height: 100px; margin-left: 88px; border-radius: 13px; background: #a947b9; color: #fff; font-size: 54px; font-weight: 600; line-height: 100px; text-align: center; }
.mtile span { align-self: flex-start; width: 112px; height: 25px; border-radius: 6px; background: #2b2b2b; color: #fff; padding: 2px 5px; margin-top: 2px; font-size: 15px; white-space: nowrap; letter-spacing: -0.2px; }

.share { position: absolute; left: 628px; top: 1104px; height: 29px; display: flex; font-weight: bold; font-size: 14.300px; letter-spacing: -0.33px; }
.sharing { width: 304px; background: #23d959; border-radius: 0 0 0 7px; color: #1c3324; display: flex; align-items: center; padding: 0 14px 0 17px; }
.sharing span { flex: 1; padding-left: 41px; }
.stop { width: 120px; background: #e02828; color: #fff; border-radius: 0 0 7px 0; display: flex; align-items: center; padding-left: 10px; }
.stop u { width: 11px; height: 11px; background: #f2fafa; border-radius: 2px; margin: -6px 5px 0 0; }
.pen { position: absolute; left: 14px; top: 1129px; width: 40px; height: 40px; overflow: visible; }
.todo-badge { position: absolute; left: 1062px; top: 1143px; width: 19px; height: 19px; border-radius: 50%; background: #4cc2ff; color: #111; font-size: 13px; line-height: 19px; text-align: center; }
```
FILE: script.js
```js
// Grid dots: every tenth column and row is emphasised.
const pitch = 26.17, x0 = 1028.5, y0 = 292;
let dots = '';
for (let c = -37; c <= 23; c++) {
  const x = Math.round(x0 + c * pitch);
  if (x < 46 || x > 1643) continue;
  for (let r = -5; r <= 29; r++) {
    const y = Math.round(y0 + r * pitch);
    if (y > 1070) continue;
    const w = c % 10 === 0 ? 3 : 1, h = r % 10 === 0 ? 3 : 1;
    const fill = w + h > 4 ? '#a0a5aa' : w + h > 2 ? '#747d86' : '#525d69';
    dots += `<rect x="${x - (w >> 1)}" y="${y - (h >> 1)}" width="${w}" height="${h}" fill="${fill}"/>`;
  }
}
document.getElementById('grid').innerHTML = dots;

const layers = [
  ['F.Cu', '#c83434'], ['B.Cu', '#4d7fc4'], ['F.Adhesive', '#840084'], ['B.Adhesive', '#000084'], ['F.Paste', '#a39189'], ['B.Paste', '#00adad'],
  ['F.Silkscreen', '#f2eda1'], ['B.Silkscreen', '#e8b2a7'], ['F.Mask', '#5d2f6e'], ['B.Mask', '#0c6e68'],
  ['User.Drawings', '#c2c2c2'], ['User.Comments', '#5994dc'], ['User.Eco1', '#b4dbd2'], ['User.Eco2', '#d8c852'],
  ['Edge.Cuts', '#d0d2cd'], ['Margin', '#ff26e2'], ['F.Courtyard', '#ff26e2'], ['B.Courtyard', '#26e9ff'],
  ['F.Fab', '#afafaf'], ['B.Fab', '#585d84'], ['User.1', '#c2c2c2'], ['User.2', '#5994dc'], ['User.3', '#b4dbd2'],
  ['User.4', '#d8c852'], ['User.5', '#c2c2c2'], ['User.6', '#5994dc'], ['User.7', '#b4dbd2'], ['User.8', '#d8c852']
];
document.getElementById('layers').innerHTML = layers.map(([name, color], i) =>
  `<div class="layer${i ? '' : ' first'}"><span class="sw${/Mask/.test(name) ? ' checker' : ''}" style="background-color:${color}"></span><svg><use href="#eye"/></svg>${name}</div>`).join('');

const filters = ['All items', 'Locked items', 'Footprints', 'Text', 'Tracks', 'Vias', 'Pads', 'Graphics', 'Zones', 'Rule Areas', 'Dimensions', 'Other items'];
document.getElementById('filter').innerHTML = filters.map(name =>
  `<div class="check"><s class="${name === 'Locked items' ? '' : 'ck'}"></s>${name}</div>`).join('');
```
